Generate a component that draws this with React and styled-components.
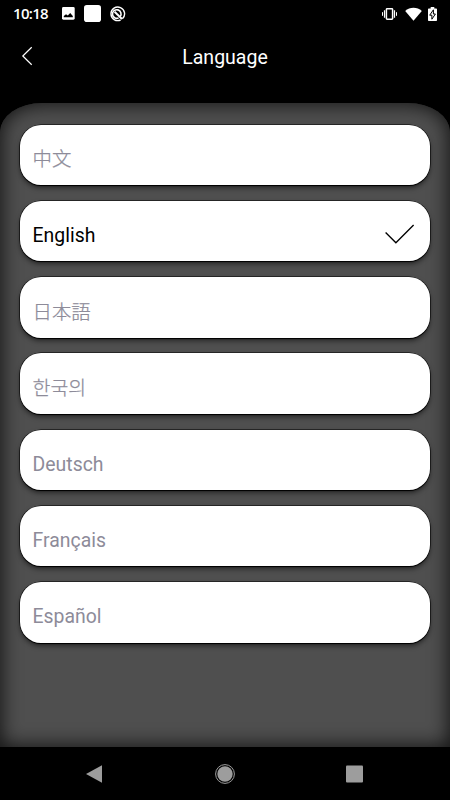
import React, { useState } from "react";
import styled, { createGlobalStyle } from "styled-components";

const GlobalStyle = createGlobalStyle`
  * {
    box-sizing: border-box;
  }

  body {
    margin: 0;
    background: #000;
    font-family: Roboto, "Noto Sans CJK SC", sans-serif;
  }
`;

const Screen = styled.div`
  width: 450px;
  height: 800px;
  display: flex;
  flex-direction: column;
  overflow: hidden;
  background: #000;
  color: #fff;
`;

const StatusBarStyled = styled.div`
  height: 27px;
  flex: none;
  display: flex;
  align-items: center;
  justify-content: space-between;
  padding: 0 13px 0 13px;

  svg {
    display: block;
  }
`;

const StatusGroup = styled.div`
  display: flex;
  align-items: center;
  gap: ${(props) => props.$gap}px;
`;

const Clock = styled.span`
  width: 41px;
  font-family: "Open Sans", sans-serif;
  font-size: 15px;
  font-weight: 600;
  line-height: 27px;
  letter-spacing: -0.7px;
  white-space: nowrap;
`;

const HeaderStyled = styled.header`
  height: 76px;
  flex: none;
  display: grid;
  grid-template-columns: 60px 1fr 60px;
  align-items: start;
`;

const BackButton = styled.button`
  width: 32px;
  height: 40px;
  margin: 9px 0 0 11px;
  padding: 0;
  border: 0;
  background: none;
  color: #fff;

  svg {
    display: block;
    margin: 0 auto;
  }
`;

const Title = styled.h1`
  margin: 19px 0 0;
  font-size: 19.5px;
  font-weight: 400;
  line-height: 24px;
  text-align: center;
`;

const Panel = styled.main`
  height: 644px;
  flex: none;
  padding: 21.6px 20px 0;
  border-radius: 42px 42px 0 0 / 29px 29px 0 0;
  background: #4f4f4f;
  box-shadow: inset 0 0 20px 1px rgba(0, 0, 0, 0.8);
`;

const LanguageList = styled.div`
  display: flex;
  flex-direction: column;
  gap: 15.75px;
`;

const LanguageItem = styled.button`
  height: 60.5px;
  display: flex;
  align-items: center;
  justify-content: space-between;
  padding: ${(props) => (props.$cjk ? 11 : 10)}px 15px 0 12.6px;
  border: 0;
  border-radius: 21px;
  background: #fff;
  box-shadow: 0 0 0 0.5px #000, 0 1px 1px #000, 0 3px 5px rgba(0, 0, 0, 0.5);
  color: ${(props) => (props.$selected ? "#000" : "#8d8b99")};
  font-family: Roboto, "${(props) => props.$font}", sans-serif;
  font-size: 19.4px;
  font-weight: ${(props) => (props.$cjk ? 300 : 400)};
  -webkit-text-stroke: ${(props) => (props.$cjk ? "0.25px" : "0")};
  line-height: 24px;
  text-align: left;

  svg {
    display: block;
    margin-top: -4px;
  }
`;

const NavBar = styled.nav`
  height: 53px;
  flex: none;
  display: grid;
  grid-template-columns: 160px 102px 157px;
  justify-items: center;
  padding: 16px 0 0 14px;
  color: #9d9d9d;
`;

const BatteryIcon = styled.svg`
  margin-left: -2px;
`;

const languages = [
  { id: "zh", name: "中文", font: "Noto Sans CJK SC", cjk: true },
  { id: "en", name: "English", font: "Noto Sans" },
  { id: "ja", name: "日本語", font: "Noto Sans CJK JP", cjk: true },
  { id: "ko", name: "한국의", font: "Noto Sans CJK KR", cjk: true },
  { id: "de", name: "Deutsch", font: "Noto Sans" },
  { id: "fr", name: "Français", font: "Noto Sans" },
  { id: "es", name: "Español", font: "Noto Sans" },
];

const CheckIcon = () => (
  <svg width="30" height="20" viewBox="0 0 30 20" fill="none">
    <path d="M0.6 8.5 10.9 18.7 28.6 1" stroke="#000" strokeWidth="1.35" />
  </svg>
);

const StatusBar = () => (
  <StatusBarStyled>
    <StatusGroup $gap={8}>
      <Clock>10:18</Clock>
      {/* picture */}
      <svg width="14" height="13" viewBox="0 0 14 13">
        <rect width="12.7" height="12.7" rx="1.4" fill="#fff" />
        <path d="M1.8 10.2V9L4 7.3 5.8 8.6 8.2 6l2.6 3v1.2z" fill="#000" />
      </svg>
      <svg width="17" height="17" viewBox="0 0 17 17">
        <rect width="17" height="17" rx="2.8" fill="#fff" />
      </svg>
      {/* crossed circle */}
      <svg width="17" height="16" viewBox="0 0 17 16" fill="none" stroke="#fff">
        <path d="M13.4 12.8A6.8 6.8 0 1 0 11.6 14" strokeWidth="1.4" />
        <path d="M11.2 10.6A4.3 4.3 0 1 0 9.6 11.9" strokeWidth="1.6" />
        <path d="M5.6 5.8 13 13" strokeWidth="2" />
      </svg>
    </StatusGroup>
    <StatusGroup $gap={8}>
      {/* vibrate */}
      <svg width="15" height="12" viewBox="0 0 15 12" fill="none" stroke="#fff">
        <rect x="4.4" y="0.8" width="6.2" height="10.4" rx="0.7" strokeWidth="1.5" />
        <path d="M2.5 2.3v7.4M12.5 2.3v7.4" strokeWidth="1.2" />
        <path d="M0.5 4.2v3.6M14.5 4.2v3.6" strokeWidth="1" />
      </svg>
      <svg width="17" height="14" viewBox="0 0 17 14">
        <path d="M0.2 4C4.8-.3 12.2-.3 16.8 4L8.5 13.8z" fill="#fff" />
      </svg>
      <BatteryIcon width="9" height="14" viewBox="0 0 9 14">
        <path
          d="M2.7 0h3.6v1.4H8.2q.8 0 .8.8v11q0 .8-.8.8H.8Q0 14 0 13.2v-11q0-.8.8-.8h1.9z"
          fill="#fff"
        />
        <path
          d="M5.4 2.8 1.7 8.2h2.2v4L7.4 7H5.4z"
          fill="#fff"
          stroke="#000"
          strokeWidth="1"
        />
      </BatteryIcon>
    </StatusGroup>
  </StatusBarStyled>
);

const App = () => {
  const [selected, setSelected] = useState("en");

  return (
    <Screen>
      <GlobalStyle />
      <StatusBar />
      <HeaderStyled>
        <BackButton aria-label="Back">
          <svg width="12" height="20" viewBox="0 0 12 20" fill="none">
            <path
              d="M10.7 1.2 1.8 10l8.9 8.8"
              stroke="currentColor"
              strokeWidth="1.2"
            />
          </svg>
        </BackButton>
        <Title>Language</Title>
      </HeaderStyled>

      <Panel>
        <LanguageList>
          {languages.map((language) => (
            <LanguageItem
              key={language.id}
              $selected={language.id === selected}
              $font={language.font}
              $cjk={language.cjk}
              onClick={() => setSelected(language.id)}
            >
              {language.name}
              {language.id === selected && <CheckIcon />}
            </LanguageItem>
          ))}
        </LanguageList>
      </Panel>

      <NavBar>
        <svg width="18" height="22" viewBox="0 0 18 22">
          <path d="M17 2.3v17.4L1 11z" fill="currentColor" />
        </svg>
        <svg width="20" height="22" viewBox="0 0 20 22">
          <circle cx="10" cy="11" r="9.4" fill="none" stroke="currentColor" />
          <circle cx="10" cy="11" r="7.7" fill="currentColor" />
        </svg>
        <svg width="17" height="22" viewBox="0 0 17 22">
          <rect y="2.5" width="17" height="17" rx="1" fill="currentColor" />
        </svg>
      </NavBar>
    </Screen>
  );
};

export default App;
